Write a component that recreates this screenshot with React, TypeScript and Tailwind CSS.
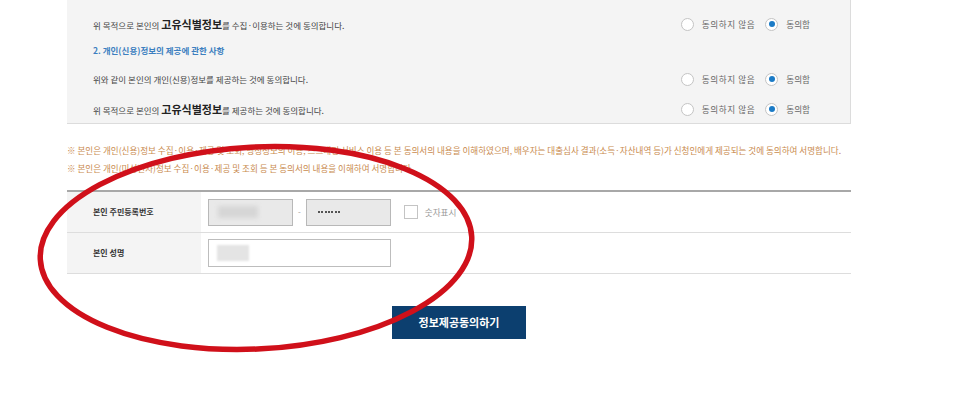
import React from "react";

const font = { fontFamily: '"Malgun Gothic", "Noto Sans CJK KR", "Noto Sans", sans-serif' };

const Radio = ({ checked }: { checked?: boolean }) => (
  <span className="flex h-[13px] w-[13px] items-center justify-center rounded-full border border-[#c4c4c4] bg-white">
    {checked && <span className="h-[6px] w-[6px] rounded-full bg-[#1b7bc6]" />}
  </span>
);

const AgreeRadios = () => (
  <div className="flex items-center text-[8.6px] text-[#666]">
    <Radio />
    <span className="ml-[8px] tracking-[0.6px]">동의하지 않음</span>
    <span className="ml-[10px]">
      <Radio checked />
    </span>
    <span className="ml-[8px]">동의함</span>
  </div>
);

const AgreeRow = ({ children, h }: { children: React.ReactNode; h: string }) => (
  <div className={`flex items-center justify-between pl-[26px] pr-[40px] ${h}`}>
    <p className="text-[8.5px] text-[#444]">{children}</p>
    <AgreeRadios />
  </div>
);

export default function App() {
  return (
    <div className="relative h-[409px] w-[966px] overflow-hidden bg-white" style={font}>
      <div className="ml-[67px] w-[784px]">
        {/* consent panel */}
        <div className="border-r border-b border-[#dcdcdc] bg-[#f4f4f4] pt-[11px]">
          <AgreeRow h="h-[26px]">
            위 목적으로 본인의 <b className="text-[11px] text-[#222]">고유식별정보</b>를 수집·이용하는 것에 동의합니다.
          </AgreeRow>
          <div className="flex h-[26px] items-center pl-[26px]">
            <p className="text-[8.5px] font-bold text-[#3c7fc0]">2. 개인(신용)정보의 제공에 관한 사항</p>
          </div>
          <AgreeRow h="h-[32px]">위와 같이 본인의 개인(신용)정보를 제공하는 것에 동의합니다.</AgreeRow>
          <AgreeRow h="h-[28px]">
            위 목적으로 본인의 <b className="text-[11px] text-[#222]">고유식별정보</b>를 제공하는 것에 동의합니다.
          </AgreeRow>
        </div>

        {/* notes */}
        <div className="mt-[17px] whitespace-nowrap text-[8.55px] leading-[18px] text-[#c98a4e]">
          <p>
            ※ 본인은 개인(신용)정보 수집·이용·제공 및 조회, 행정정보의 이용, 스크래핑 서비스 이용 등 본 동의서의 내용을 이해하였으며, 배우자는 대출심사 결과(소득·자산내역 등)가 신청인에게 제공되는 것에 동의하여 서명합니다.
          </p>
          <p>※ 본인은 개인(미성년자)정보 수집·이용·제공 및 조회 등 본 동의서의 내용을 이해하여 서명합니다.</p>
        </div>

        {/* identity table */}
        <div className="mt-[13px] border-t-2 border-[#a8a8a8]">
          <div className="flex h-[41px] border-b border-[#dddddd]">
            <div className="flex w-[134px] items-center bg-[#f4f4f4] pl-[26px] text-[8px] font-bold text-[#333]">
              본인 주민등록번호
            </div>
            <div className="flex items-center pl-[7px]">
              <div className="flex h-[27px] w-[85px] items-center border border-[#b8b8b8] bg-[#e9e9e9] pl-[9px]">
                <span className="h-[12px] w-[40px] bg-[#d6d6d6] blur-[2px]" />
              </div>
              <span className="mx-[5px] text-[8px] text-[#999]">-</span>
              <div className="flex h-[27px] w-[85px] items-center gap-[1.4px] border border-[#b8b8b8] bg-[#e9e9e9] pl-[11px]">
                {[0, 1, 2, 3, 4, 5, 6].map((i) => (
                  <span key={i} className="h-[2px] w-[2px] rounded-full bg-[#222]" />
                ))}
              </div>
              <span className="ml-[13px] h-[14px] w-[14px] border border-[#c4c4c4] bg-white" />
              <span className="ml-[7px] text-[8.6px] text-[#999]">숫자표시</span>
            </div>
          </div>
          <div className="flex h-[41px] border-b border-[#dddddd]">
            <div className="flex w-[134px] items-center bg-[#f4f4f4] pl-[26px] text-[8px] font-bold text-[#333]">
              본인 성명
            </div>
            <div className="flex items-center pl-[7px]">
              <div className="flex h-[28px] w-[183px] items-center border border-[#bdbdbd] bg-white pl-[8px]">
                <span className="h-[16px] w-[32px] bg-[#e4e4e4] blur-[1px]" />
              </div>
            </div>
          </div>
        </div>

        <div className="mt-[32px] flex justify-center">
          <button className="h-[33px] w-[134px] bg-[#0c3f6f] text-[11px] font-bold text-white">정보제공동의하기</button>
        </div>
      </div>

      {/* red hand-drawn annotation */}
      <svg className="pointer-events-none absolute left-0 top-0" width="966" height="409">
        <ellipse
          cx="256"
          cy="248"
          rx="216"
          ry="101"
          fill="none"
          stroke="#d0101a"
          strokeWidth="5.5"
          transform="rotate(-3 256 248)"
        />
      </svg>
    </div>
  );
}
